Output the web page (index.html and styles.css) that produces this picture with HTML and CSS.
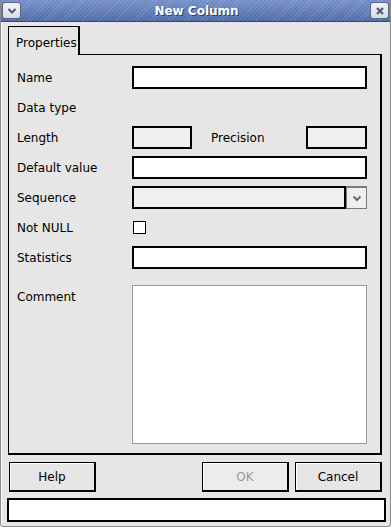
FILE: index.html
```html
<!DOCTYPE html>
<html>
<head>
<meta charset="utf-8">
<link rel="stylesheet" href="styles.css">
</head>
<body>
<div class="window">
  <div class="titlebar">
    <div class="tbtn">
      <svg width="10" height="8" viewBox="0 0 10 8"><path d="M1.5 2 L5 5.5 L8.5 2" fill="none" stroke="#4d5a7a" stroke-width="2"/></svg>
    </div>
    <div class="title">New Column</div>
    <div class="tbtn">
      <svg width="10" height="10" viewBox="0 0 10 10"><path d="M2 2 L8 8 M8 2 L2 8" fill="none" stroke="#4d5a7a" stroke-width="2.2"/></svg>
    </div>
  </div>
  <div class="content">
    <div class="tabs"><div class="tab">Properties</div></div>
    <div class="panel">
      <div class="form">
        <div class="label">Name</div>
        <div class="field"><div class="input"></div></div>

        <div class="label">Data type</div>
        <div class="field"></div>

        <div class="label">Length</div>
        <div class="field split">
          <div class="input disabled small"></div>
          <div class="label inner">Precision</div>
          <div class="input disabled small2"></div>
        </div>

        <div class="label">Default value</div>
        <div class="field"><div class="input"></div></div>

        <div class="label">Sequence</div>
        <div class="field combo">
          <div class="combo-box"></div>
          <div class="combo-btn">
            <svg width="10" height="7" viewBox="0 0 10 7"><path d="M1.5 1.5 L5 5 L8.5 1.5" fill="none" stroke="#6e6e6e" stroke-width="2"/></svg>
          </div>
        </div>

        <div class="label">Not NULL</div>
        <div class="field"><div class="checkbox"></div></div>

        <div class="label">Statistics</div>
        <div class="field"><div class="input"></div></div>

        <div class="label comment-label">Comment</div>
        <div class="field comment-field"><div class="textarea"></div></div>
      </div>
    </div>
    <div class="buttons">
      <div class="btn">Help</div>
      <div class="spacer"></div>
      <div class="btn disabled-btn">OK</div>
      <div class="btn">Cancel</div>
    </div>
    <div class="status"></div>
  </div>
</div>
</body>
</html>
```
FILE: styles.css
```css
* { box-sizing: border-box; }
html, body { margin: 0; padding: 0; background: #e6e6e6; }
body {
  font-family: "DejaVu Sans", "Bitstream Vera Sans", sans-serif;
  font-size: 12px;
  color: #000;
}
.window {
  width: 391px;
  height: 527px;
  background: #e6e6e6;
  border: 1px solid #8a8a8a;
  border-top: none;
  border-radius: 0 0 4px 4px;
  display: flex;
  flex-direction: column;
  overflow: hidden;
}
.titlebar {
  height: 22px;
  flex: none;
  display: flex;
  align-items: center;
  padding: 0 2px 0 2px;
  background:
    repeating-linear-gradient(135deg, rgba(255,255,255,0.13) 0 1px, rgba(255,255,255,0) 1px 3px),
    linear-gradient(#7590c8, #4f6aa6);
  border-bottom: 1px solid #35486f;
  margin: 0 -1px;
}
.tbtn {
  width: 19px;
  height: 17px;
  border: 1px solid #56678e;
  border-radius: 3px;
  background: linear-gradient(#f2f3f7, #d8dce6);
  display: flex;
  align-items: center;
  justify-content: center;
  flex: none;
}
.title {
  flex: 1;
  text-align: center;
  color: #fff;
  font-weight: bold;
  font-size: 12px;
  text-shadow: 1px 1px 0 #2d3f66;
  padding-left: 2px;
}
.content {
  flex: 1;
  display: flex;
  flex-direction: column;
  padding: 4px 8px 0 6px;
  border-left: 1px solid #fff;
}
.tabs { display: flex; height: 28px; flex: none; }
.tab {
  width: 72px;
  height: 29px;
  border: 1px solid #000;
  border-bottom: none;
  border-right-width: 2px;
  background: #e6e6e6;
  padding: 9px 0 0 7px;
  position: relative;
  z-index: 1;
}
.panel {
  height: 401px;
  flex: none;
  border: 1px solid #000;
  border-right-width: 2px;
  border-bottom-width: 2px;
  padding: 11px 13px 0 8px;
}
.form {
  display: grid;
  grid-template-columns: 115px 1fr;
  grid-auto-rows: 23px;
  row-gap: 7px;
}
.label { display: flex; align-items: center; white-space: nowrap; }
.field { display: flex; align-items: center; }
.input {
  height: 23px;
  width: 100%;
  background: #fff;
  border: 2px solid #000;
  border-right-width: 1px;
  border-bottom-width: 1px;
  box-shadow: inset -1px -1px 0 #000;
}
.input.disabled { background: #efefef; }
.input.small { width: 60px; flex: none; }
.input.small2 { width: 61px; flex: none; margin-left: auto; }
.label.inner { margin-left: 19px; }
.combo { position: relative; }
.combo-box {
  flex: 1;
  height: 23px;
  background: #efefef;
  border: 2px solid #000;
  border-right-width: 1px;
  border-bottom-width: 1px;
  box-shadow: inset -1px -1px 0 #000;
}
.combo-btn {
  width: 21px;
  height: 23px;
  flex: none;
  border: 1px solid #7a7a7a;
  border-top: 2px solid #7a7a7a;
  background: #efefef;
  display: flex;
  align-items: center;
  justify-content: center;
}
.checkbox {
  width: 13px;
  height: 13px;
  margin-left: 1px;
  background: #fff;
  border: 1px solid #000;
}
.comment-label { align-self: start; margin-top: 9px; height: 23px; }
.comment-field { grid-row: span 6; align-self: start; margin-top: 9px; }
.textarea {
  width: 100%;
  height: 159px;
  background: #fff;
  border: 1px solid #9a9a9a;
}
.buttons {
  display: flex;
  gap: 6px;
  margin-top: 7px;
  padding-left: 1px;
  height: 30px;
  flex: none;
}
.spacer { flex: 1; }
.btn {
  width: 87px;
  height: 30px;
  border: 1px solid #000;
  border-right-width: 2px;
  border-bottom-width: 2px;
  background: #e6e6e6;
  box-shadow: inset 1px 1px 0 #fff;
  display: flex;
  align-items: center;
  justify-content: center;
}
.disabled-btn { color: #9a9a9a; background: #ececec; }
.status {
  margin-top: 6px;
  margin-left: -1px;
  margin-right: -4px;
  height: 24px;
  background: #fff;
  border: 2px solid #000;
  border-right-width: 1px;
  border-bottom-width: 1px;
  box-shadow: inset -1px -1px 0 #000;
}
```
